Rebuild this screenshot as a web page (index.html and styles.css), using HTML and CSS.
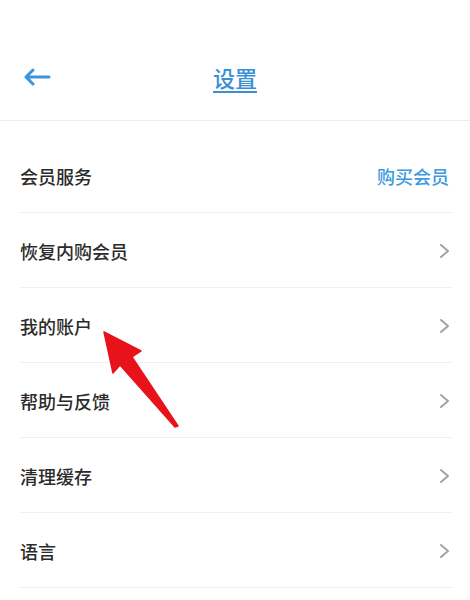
FILE: index.html
```html
<!DOCTYPE html>
<html lang="zh-CN">
<head>
<meta charset="utf-8">
<link rel="stylesheet" href="styles.css">
</head>
<body>
<div class="page">
  <header class="header">
    <svg class="back" width="28" height="18" viewBox="0 0 28 18">
      <path d="M26 9H3M10 2L3 9l7 7" fill="none" stroke="#3b94dc" stroke-width="3" stroke-linecap="round" stroke-linejoin="round"/>
    </svg>
    <h1 class="title">设置</h1>
  </header>
  <ul class="list">
    <li class="row"><span class="label">会员服务</span><span class="link">购买会员</span></li>
    <li class="row"><span class="label">恢复内购会员</span><svg class="chev" width="12" height="16" viewBox="0 0 12 16"><path d="M2 2l7 6-7 6" fill="none" stroke="#a3a3a3" stroke-width="2" stroke-linejoin="round" stroke-linecap="round"/></svg></li>
    <li class="row"><span class="label">我的账户</span><svg class="chev" width="12" height="16" viewBox="0 0 12 16"><path d="M2 2l7 6-7 6" fill="none" stroke="#a3a3a3" stroke-width="2" stroke-linejoin="round" stroke-linecap="round"/></svg></li>
    <li class="row"><span class="label">帮助与反馈</span><svg class="chev" width="12" height="16" viewBox="0 0 12 16"><path d="M2 2l7 6-7 6" fill="none" stroke="#a3a3a3" stroke-width="2" stroke-linejoin="round" stroke-linecap="round"/></svg></li>
    <li class="row"><span class="label">清理缓存</span><svg class="chev" width="12" height="16" viewBox="0 0 12 16"><path d="M2 2l7 6-7 6" fill="none" stroke="#a3a3a3" stroke-width="2" stroke-linejoin="round" stroke-linecap="round"/></svg></li>
    <li class="row"><span class="label">语言</span><svg class="chev" width="12" height="16" viewBox="0 0 12 16"><path d="M2 2l7 6-7 6" fill="none" stroke="#a3a3a3" stroke-width="2" stroke-linejoin="round" stroke-linecap="round"/></svg></li>
  </ul>
  <svg class="pointer" width="470" height="600" viewBox="0 0 470 600">
    <polygon points="104,332 141,351 132,357 178,426 175,427 120,365 113,373" fill="#e8121a" stroke="#e8121a" stroke-width="1.5" stroke-linejoin="round"/>
  </svg>
</div>
</body>
</html>
```

FILE: styles.css
```css
* { box-sizing: border-box; }
html, body { margin: 0; padding: 0; background: #fff; }
body {
  font-family: "Noto Sans CJK SC", "Noto Sans", sans-serif;
  width: 470px;
  height: 600px;
  overflow: hidden;
}
.page { position: relative; width: 470px; height: 600px; }
.header {
  position: relative;
  height: 121px;
  padding-top: 34px;
  border-bottom: 1px solid #ececec;
}
.back { position: absolute; left: 23px; top: 68px; }
.title {
  margin: 0;
  height: 86px;
  line-height: 86px;
  text-align: center;
  font-size: 22px;
  font-weight: 500;
  color: #3a8fd6;
  text-decoration: underline;
  text-underline-offset: 4px;
  text-decoration-thickness: 1.5px;
}
.list {
  list-style: none;
  margin: 17px 18px 0 20px;
  padding: 0;
}
.row {
  display: flex;
  align-items: center;
  justify-content: space-between;
  height: 75px;
  padding-top: 2px;
  border-bottom: 1px solid #efefef;
}
.label { font-size: 18px; font-weight: 500; color: #2b2b2b; }
.link { font-size: 18px; font-weight: 500; color: #3d9ae0; margin-right: 3px; }
.chev { margin-right: 1px; }
.pointer { position: absolute; left: 0; top: 0; pointer-events: none; }
```
